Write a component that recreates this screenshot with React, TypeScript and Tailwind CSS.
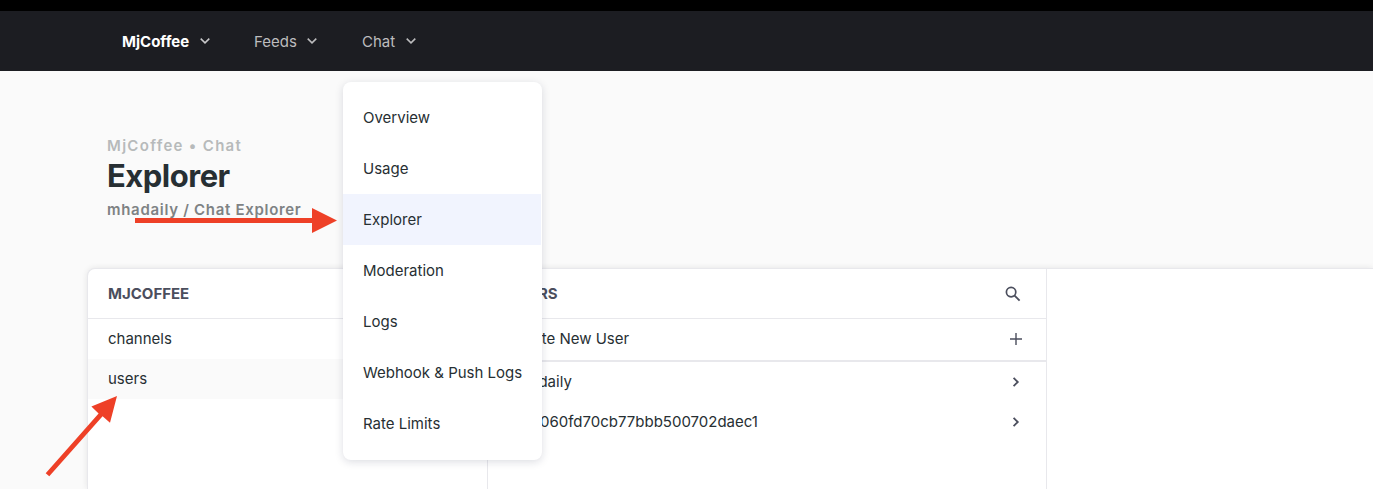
import React from "react";

const menuItems = ["Overview", "Usage", "Explorer", "Moderation", "Logs", "Webhook & Push Logs", "Rate Limits"];

function ChevronDown({ className = "" }: { className?: string }) {
  return (
    <svg className={className} width="12" height="8" viewBox="0 0 12 8" fill="none">
      <path d="M1.7 1.6 6 5.9l4.3-4.3" stroke="currentColor" strokeWidth="1.5" />
    </svg>
  );
}

function ChevronRight() {
  return (
    <svg className="mr-[1px]" width="8" height="12" viewBox="0 0 8 12" fill="none">
      <path d="M1.6 1.8 5.8 6l-4.2 4.2" stroke="#4b4e5d" strokeWidth="1.8" />
    </svg>
  );
}

function SearchIcon() {
  return (
    <svg width="16" height="16" viewBox="0 0 16 16" fill="none">
      <circle cx="6.1" cy="6.1" r="4.7" stroke="#4b4e5d" strokeWidth="1.7" />
      <path d="m9.6 9.6 5 5" stroke="#4b4e5d" strokeWidth="1.9" />
    </svg>
  );
}

function PlusIcon() {
  return (
    <svg className="mb-px" width="12" height="12" viewBox="0 0 12 12" fill="none">
      <path d="M6 0v12M0 6h12" stroke="#4b4e5d" strokeWidth="1.4" />
    </svg>
  );
}

function Menu() {
  return (
    <div className="absolute left-[343px] top-[82px] flex h-[378px] w-[199px] flex-col rounded-lg bg-white pt-3 shadow-[0_2px_8px_rgba(20,25,60,0.15)]">
      <div className="-mt-0.5 flex flex-col">
        {menuItems.map((label) => (
          <div
            key={label}
            className={`flex h-[51px] shrink-0 items-center whitespace-nowrap pl-5 pt-0.5 text-[15px] text-[#272f33] ${label === "Explorer" ? "mr-px bg-[#f1f4fe]" : ""}`}
          >
            {label}
          </div>
        ))}
      </div>
    </div>
  );
}

export default function App() {
  return (
    <div className="relative flex h-[489px] w-full flex-col overflow-hidden bg-[#fafafa] font-['Inter',sans-serif] text-[15px] text-[#272f33]">
      <div className="h-[11px] shrink-0 bg-black" />
      <nav className="flex h-[60px] shrink-0 items-center bg-[#1c1d22] pl-[122px] text-[#bcbcbe]">
        <div className="flex w-[132px] items-center font-bold text-white">
          <span className="w-[77px] pt-0.5">MjCoffee</span>
          <ChevronDown className="text-[#c8c8ca]" />
        </div>
        <div className="flex w-[108px] items-center">
          <span className="w-[52px] pt-0.5">Feeds</span>
          <ChevronDown />
        </div>
        <div className="flex items-center">
          <span className="w-[43px] pt-0.5">Chat</span>
          <ChevronDown />
        </div>
      </nav>

      <header className="flex h-[197px] shrink-0 flex-col pl-[107px] pt-[65px]">
        <span className="text-[15px] leading-5 font-semibold tracking-[1.3px] text-[#b7babb]">MjCoffee • Chat</span>
        <h1 className="-mt-px mb-px text-[31px] leading-[42px] font-bold tracking-[-0.5px] text-[#272f33]">Explorer</h1>
        <span className="text-[15px] leading-6 font-semibold tracking-[0.7px] text-[#7e8284]">mhadaily / Chat Explorer</span>
      </header>

      <main className="ml-[87px] flex min-h-0 flex-1 rounded-tl-lg border-l border-t border-[#e8e8ec] bg-white shadow-[0_0_6px_rgba(0,0,0,0.09)]">
        <section className="w-[400px] shrink-0 border-r border-[#e8e8ec]">
          <div className="flex h-[50px] items-center border-b border-[#e8e8ec] pl-5 font-bold text-[#4b4e5d]">
            <span className="pt-0.5">MJCOFFEE</span>
          </div>
          <div className="flex h-10 items-center pl-5">channels</div>
          <div className="flex h-10 items-center bg-[#fafafa] pl-5">users</div>
        </section>
        <section className="w-[559px] shrink-0 border-r border-[#e8e8ec]">
          <div className="flex h-[50px] items-center justify-between border-b border-[#e8e8ec] pl-5 pr-[25px] font-bold text-[#4b4e5d]">
            <span className="pt-0.5">USERS</span>
            <SearchIcon />
          </div>
          <div className="flex h-[43px] items-center justify-between border-b-2 border-[#e8e8ec] pl-5 pr-6">
            Create New User
            <PlusIcon />
          </div>
          <div className="flex h-10 items-center justify-between pl-5 pr-[25px]">
            mhadaily
            <ChevronRight />
          </div>
          <div className="flex h-10 items-center justify-between pl-[52px] pr-[25px]">
            060fd70cb77bbb500702daec1
            <ChevronRight />
          </div>
        </section>
      </main>

      <Menu />

      <svg className="pointer-events-none absolute inset-0" width="1373" height="489" viewBox="0 0 1373 489" fill="#ee4027">
        <path d="M135 218h177v-10l25 12.5-25 12.5v-10H135z" />
        <path d="m45.7 473.3 52.9-59.9-7.2-6.9L117 396l-7 26.7-7.4-6.4-53.3 60z" />
      </svg>
    </div>
  );
}
